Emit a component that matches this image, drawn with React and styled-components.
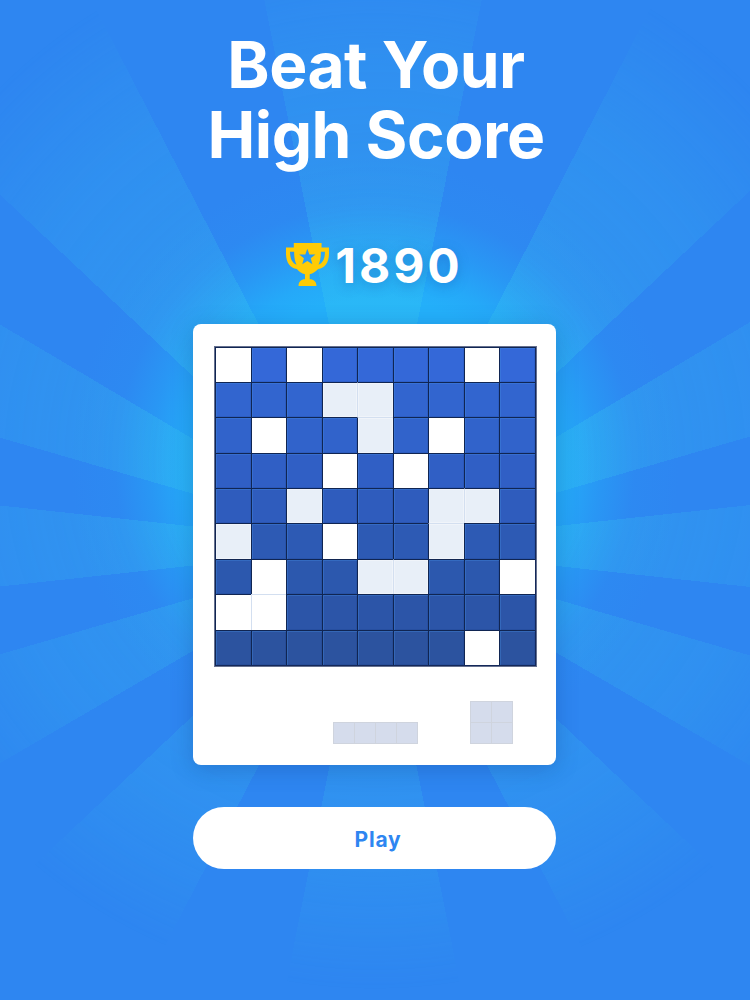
import React from 'react';
import styled, { createGlobalStyle } from 'styled-components';

const GlobalStyle = createGlobalStyle`
    * {
        box-sizing: border-box;
    }
    body {
        margin: 0;
        background: #2e86f1;
        font-family: Inter, "Liberation Sans", sans-serif;
    }
`;

const Screen = styled.main`
    position: relative;
    isolation: isolate;
    display: flex;
    flex-direction: column;
    align-items: center;
    width: 750px;
    height: 1000px;
    padding-top: 30px;
    padding-right: 1px;
    overflow: hidden;
    background:
        radial-gradient(circle at 375px 464px,
            #24b0fa 0,
            #24b0fa 165px,
            rgba(36, 172, 249, 0.92) 190px,
            rgba(38, 160, 246, 0.65) 225px,
            rgba(42, 145, 243, 0.28) 260px,
            rgba(46, 134, 241, 0) 305px),
        #2e86f1;
`;

// light beams, mirrored left/right around the middle of the board
const Rays = styled.div`
    position: absolute;
    inset: 0;
    z-index: -1;
    background: conic-gradient(from 0deg at 373px 546px,
        ${({ $stops }) => $stops});
    mask-image: radial-gradient(circle at 375px 460px,
        #000 0, #000 210px, rgba(0, 0, 0, 0.75) 290px, rgba(0, 0, 0, 0.55) 400px, transparent 530px);
`;

const Title = styled.h1`
    margin: 0;
    padding-left: 3px;
    color: #fff;
    font-size: 64px;
    font-weight: 700;
    line-height: 69.5px;
    letter-spacing: -0.5px;
    text-align: center;
`;

const Score = styled.div`
    display: flex;
    align-items: center;
    gap: 6px;
    height: 48px;
    margin-top: 71px;
    color: #fff;
    font-size: 48px;
    font-weight: 700;
    line-height: 48px;
    letter-spacing: 3px;
    text-shadow: 0 3px 12px rgba(20, 80, 170, 0.35);
`;

const ScoreValue = styled.span`
    padding-top: 3px;
`;

const Trophy = styled.svg`
    width: 43px;
    height: 43px;
    fill: #ffcb05;
`;

const Card = styled.section`
    width: 363px;
    height: 440.5px;
    margin-top: 36px;
    padding: 21.5px 0 0 21px;
    border-radius: 8px;
    background: #fff;
    box-shadow: 0 4px 22px rgba(16, 62, 140, 0.3);
`;

const Board = styled.div`
    display: grid;
    grid-template-columns: repeat(9, 35.5px);
    grid-template-rows: repeat(9, 35.4px);
    width: 322.5px;
    height: 321.6px;
    padding: 0 1px 1px 0;
    border: 1px solid #66718f;
    background: #14285a;
`;

const fills = {
    empty: '#fff',
    pale: '#e8eff8',
};

const Cell = styled.div`
    background: ${({ $kind, $color }) => fills[$kind] || $color};
    border-left: 1px solid ${({ $softLeft }) => ($softLeft ? '#d3dff0' : '#102552')};
    border-top: 1px solid ${({ $softTop }) => ($softTop ? '#d3dff0' : '#102552')};
    box-shadow: ${({ $kind }) => ($kind === 'full'
        ? 'inset 1px 1px 0 rgba(70, 140, 225, 0.35), inset -1px -1px 0 rgba(10, 40, 110, 0.12)'
        : 'inset 0 0 0 1px rgba(255, 255, 255, 0.35)')};
`;

const Tray = styled.div`
    display: flex;
    align-items: flex-end;
    justify-content: flex-end;
    gap: 52px;
    height: 76.5px;
    padding-right: 43px;
`;

const Piece = styled.div`
    display: grid;
    grid-template-columns: repeat(${({ $cols }) => $cols}, 21px);
    grid-auto-rows: 21px;
    border-right: 1px solid #cfd4de;
    border-bottom: 1px solid #cfd4de;
`;

const PieceBlock = styled.span`
    background: #d5dcec;
    border-left: 1px solid #cfd4de;
    border-top: 1px solid #cfd4de;
`;

const PlayButton = styled.button`
    width: 363px;
    height: 62px;
    margin-top: 42.5px;
    padding: 2px 0 0 7px;
    border: 0;
    border-radius: 31px;
    background: #fff;
    color: #2e86f1;
    font-family: inherit;
    font-size: 21px;
    font-weight: 700;
    letter-spacing: 0.8px;
`;

// . empty, o pale, # filled
const rows = [
    '.#.####.#',
    '###oo####',
    '#.##o#.##',
    '###.#.###',
    '##o###oo#',
    'o##.##o##',
    '#.##oo##.',
    '..#######',
    '#######.#',
];

const rowColors = [
    '#3468d8', '#3265cf', '#3163cb', '#305fc5', '#2f5cbd',
    '#2d5ab4', '#2c58ae', '#2c55a8', '#2c539f',
];

const kinds = { '.': 'empty', o: 'pale', '#': 'full' };

const edges = [11.25, 27.3, 46.7, 59.3, 73.8, 83.8, 96.2, 106.2, 120.2, 133.3, 152.5, 168.8];
const allEdges = [...edges, ...edges.map((edge) => 360 - edge).reverse()];
const light = 'rgba(60, 205, 238, 0.25)';

const rayStops = [0, ...allEdges].map((start, i) => {
    const end = i < allEdges.length ? allEdges[i] : 360;
    const color = i % 2 === 0 ? light : 'rgba(60, 205, 238, 0)';
    return `${color} ${start}deg ${end}deg`;
}).join(', ');

const isOpen = (row, col) => rows[row] !== undefined && rows[row][col] !== undefined && rows[row][col] !== '#';

function GameBoard() {
    return (
        <Board>
            {rows.map((line, row) => line.split('').map((mark, col) => (
                <Cell
                    key={`${row}-${col}`}
                    $kind={kinds[mark]}
                    $color={rowColors[row]}
                    $softLeft={mark !== '#' && isOpen(row, col - 1)}
                    $softTop={mark !== '#' && isOpen(row - 1, col)}
                />
            )))}
        </Board>
    )
}

function TrayPiece({ cols, count }) {
    return (
        <Piece $cols={cols}>
            {Array.from({ length: count }, (_, i) => <PieceBlock key={i} />)}
        </Piece>
    )
}

function App() {
    return (
        <>
            <GlobalStyle />
            <Screen>
                <Rays $stops={rayStops} />
                <Title>Beat Your<br />High Score</Title>
                <Score>
                    <Trophy viewBox="0 0 127 127" aria-hidden="true">
                        <path
                            fillRule="evenodd"
                            d="M23 0H105V13H127V30C127 58 115 74 95 77C88 85 80 90 70 92V107C82 107 90 114 90 127H37C37 114 45 107 56 107V92C46 90 38 85 32 77C12 74 0 58 0 30V13H23ZM24 26H12C12 46 18 59 31 64C26 53 24 42 24 26ZM103 26C103 42 101 53 96 64C109 59 115 46 115 26ZM63 17L57 34L39 34L53 45L48 63L63 53L78 63L73 45L87 34L69 34Z"
                        />
                    </Trophy>
                    <ScoreValue>1890</ScoreValue>
                </Score>
                <Card>
                    <GameBoard />
                    <Tray>
                        <TrayPiece cols={4} count={4} />
                        <TrayPiece cols={2} count={4} />
                    </Tray>
                </Card>
                <PlayButton>Play</PlayButton>
            </Screen>
        </>
    )
}

export default App
